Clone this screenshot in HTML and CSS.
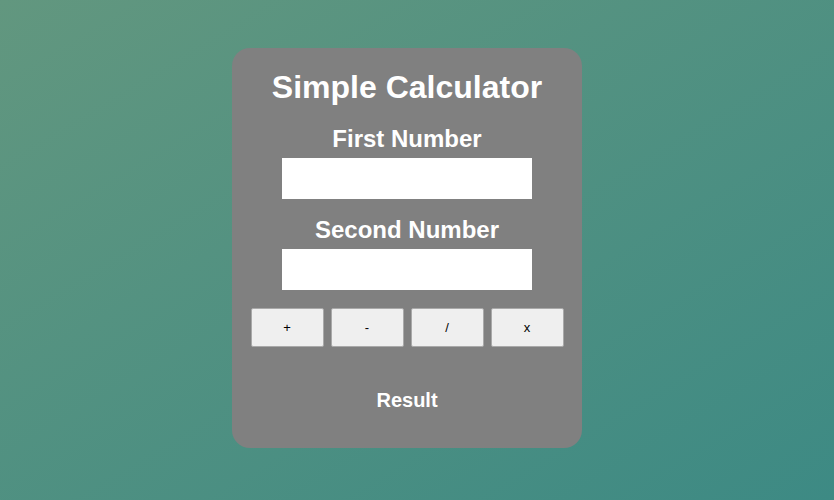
FILE: index.html
```html
<!DOCTYPE html>
<html>
<head>
<meta charset="utf-8">
<link rel="stylesheet" href="styles.css">
</head>
<body>
<div class="calc">
  <h1 class="title">Simple Calculator</h1>
  <label class="label" for="a">First Number</label>
  <input class="field" id="a" type="text">
  <label class="label label-second" for="b">Second Number</label>
  <input class="field" id="b" type="text">
  <div class="ops">
    <button class="op">+</button>
    <button class="op">-</button>
    <button class="op">/</button>
    <button class="op">x</button>
  </div>
  <div class="result">Result</div>
</div>
</body>
</html>
```
FILE: styles.css
```css
html, body {
  margin: 0;
  padding: 0;
  height: 100%;
}
body {
  background: linear-gradient(to bottom right, #62977f, #3d8a84);
  font-family: "Liberation Sans", Arial, sans-serif;
  display: flex;
  justify-content: center;
  align-items: flex-start;
}
.calc {
  box-sizing: border-box;
  margin: 48px 20px 0 0;
  width: 350px;
  height: 400px;
  background: #808080;
  border-radius: 18px;
  display: flex;
  flex-direction: column;
  align-items: center;
  color: #fff;
  padding-top: 21px;
}
.title {
  margin: 0;
  font-size: 32px;
  line-height: 37px;
  font-weight: bold;
}
.label {
  margin-top: 19px;
  font-size: 24px;
  line-height: 28px;
  font-weight: bold;
}
.label-second {
  margin-top: 17px;
}
.field {
  box-sizing: border-box;
  margin-top: 5px;
  width: 250px;
  height: 41px;
  border: none;
  background: #fff;
  padding: 0 6px;
  font-size: 16px;
}
.ops {
  margin-top: 18px;
  display: flex;
  gap: 7px;
}
.op {
  box-sizing: border-box;
  width: 73px;
  height: 39px;
  background: #efefef;
  border: 1px solid #a9a9a9;
  border-radius: 2px;
  color: #000;
  font-family: "Liberation Sans", Arial, sans-serif;
  font-size: 13px;
  padding: 0;
}
.result {
  margin-top: 42px;
  font-size: 20px;
  line-height: 23px;
  font-weight: bold;
}
```
